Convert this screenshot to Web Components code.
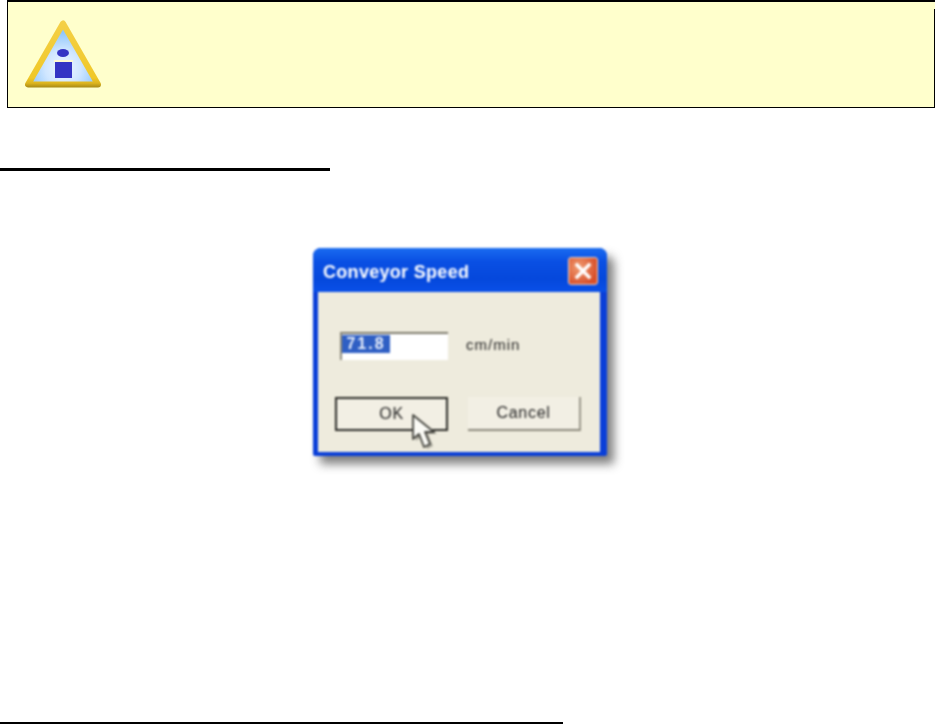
<!DOCTYPE html>
<html>
<head>
<meta charset="utf-8">
<title>Conveyor Speed</title>
<style>
  html, body { margin: 0; padding: 0; background: #fff; }
  body { width: 935px; height: 724px; overflow: hidden; display: flex; flex-direction: column; font-family: "Liberation Sans", sans-serif; }
</style>
</head>
<body>
<note-box>
  <svg slot="icon" width="80" height="72" viewBox="0 0 80 72" style="filter:blur(.5px)">
    <defs>
      <radialGradient id="sky" gradientUnits="userSpaceOnUse" cx="41" cy="48" r="36">
        <stop offset="0" stop-color="#f0f7ff"/>
        <stop offset="0.5" stop-color="#cfe6ff"/>
        <stop offset="1" stop-color="#8fc6fb"/>
      </radialGradient>
      <linearGradient id="rim" gradientUnits="userSpaceOnUse" x1="0" y1="0" x2="0" y2="68">
        <stop offset="0" stop-color="#f4d048"/>
        <stop offset="0.85" stop-color="#f0c828"/>
        <stop offset="0.93" stop-color="#dcb41e"/>
        <stop offset="1" stop-color="#a08414"/>
      </linearGradient>
    </defs>
    <path d="M41 3.5 L6 64.5 H76 Z" fill="url(#sky)" stroke="url(#rim)" stroke-width="6" stroke-linejoin="round"/>
    <ellipse cx="41" cy="33" rx="6" ry="4" fill="#3434c4"/>
    <rect x="33" y="42" width="17" height="16" fill="#3434c4"/>
    <rect x="32" y="40" width="19" height="2" fill="#fdf8d0"/>
  </svg>
</note-box>
<section-rule style="width:330px;height:3px;margin-top:60px"></section-rule>
<div style="display:flex;margin-top:77px;padding-left:313px">
  <xp-dialog heading="Conveyor Speed">
    <xp-field value="71.8" unit="cm/min"></xp-field>
    <div slot="actions" style="display:flex;gap:20px">
      <xp-button primary>OK</xp-button>
      <xp-button>Cancel</xp-button>
    </div>
    <svg slot="cursor" width="30" height="36" viewBox="0 0 30 36">
      <path d="M3 1 L3 25 L9 20 L14 33 L20 30 L15 18 L24 18 Z" fill="#55554e" opacity=".45" transform="translate(3 2)"/>
      <path d="M3 1 L3 25 L9 20 L14 33 L20 30 L15 18 L24 18 Z" fill="#fbfbf6" stroke="#44443e" stroke-width="1.8" stroke-linejoin="round"/>
    </svg>
  </xp-dialog>
</div>
<section-rule style="width:563px;margin-top:auto"></section-rule>

<script>
class NoteBox extends HTMLElement {
  constructor() {
    super();
    this.attachShadow({ mode: 'open' });
    this.shadowRoot.innerHTML = `
      <style>
        :host {
          display: flex;
          align-items: flex-start;
          position: relative;
          box-sizing: border-box;
          height: 108px;
          margin-left: 7px;
          padding: 18px 0 0 14px;
          background: #ffffcc;
          border-top: 2px solid #000;
          border-left: 1px solid #000;
          border-bottom: 1px solid #000;
        }
        .edge {
          position: absolute;
          top: 7px;
          bottom: 0;
          right: 0;
          width: 1px;
          background: #000;
        }
      </style>
      <slot name="icon"></slot>
      <div class="edge"></div>
    `;
  }
}

class SectionRule extends HTMLElement {
  constructor() {
    super();
    this.attachShadow({ mode: 'open' });
    this.shadowRoot.innerHTML = `
      <style>
        :host {
          display: block;
          height: 2px;
          flex: none;
          background: #000;
        }
      </style>
    `;
  }
}

class XpDialog extends HTMLElement {
  constructor() {
    super();
    this.attachShadow({ mode: 'open' });
    this.shadowRoot.innerHTML = `
      <style>
        :host {
          display: flex;
          flex-direction: column;
          position: relative;
          box-sizing: border-box;
          width: 294px;
          height: 208px;
          border-radius: 8px 8px 2px 2px;
          background: #0a3fd8;
          box-shadow: 7px 8px 10px rgba(60, 60, 60, .65);
          filter: blur(1px);
        }
        .bar {
          display: flex;
          align-items: center;
          justify-content: space-between;
          height: 44px;
          box-sizing: border-box;
          padding: 2px 9px 0 10px;
          border-radius: 8px 8px 0 0;
          background: linear-gradient(#1a6cf0, #0a50e4 30%, #0548dc 70%, #0a50e8);
        }
        .title {
          color: #fff;
          font: bold 18px "Liberation Sans", sans-serif;
          letter-spacing: .3px;
          padding-top: 2px;
        }
        .close {
          display: flex;
          align-items: center;
          justify-content: center;
          width: 30px;
          height: 28px;
          border-radius: 3px;
          border: 1px solid #f2d4c4;
          box-sizing: border-box;
          background: radial-gradient(circle at 35% 35%, #f09a70, #d8502a 75%);
        }
        .body {
          flex: 1;
          display: flex;
          flex-direction: column;
          margin: 0 7px 4px 5px;
          padding: 40px 0 0 17px;
          background: #eeebdd;
        }
        .actions { margin-top: 37px; }
        .cursor { position: absolute; left: 97px; top: 166px; line-height: 0; }
      </style>
      <div class="bar">
        <span class="title"></span>
        <span class="close">
          <svg width="18" height="18" viewBox="0 0 18 18">
            <path d="M3 3 L15 15 M15 3 L3 15" stroke="#fff" stroke-width="3.4" stroke-linecap="square"/>
          </svg>
        </span>
      </div>
      <div class="body">
        <slot></slot>
        <div class="actions"><slot name="actions"></slot></div>
      </div>
      <div class="cursor"><slot name="cursor"></slot></div>
    `;
    this.shadowRoot.querySelector('.title').textContent = this.getAttribute('heading');
  }
}

class XpField extends HTMLElement {
  constructor() {
    super();
    this.attachShadow({ mode: 'open' });
    this.shadowRoot.innerHTML = `
      <style>
        :host {
          display: flex;
          align-items: center;
          gap: 18px;
          padding-left: 5px;
          font: 15px "Liberation Sans", sans-serif;
          color: #222;
        }
        .input {
          box-sizing: border-box;
          display: flex;
          width: 108px;
          height: 28px;
          padding: 1px 0 7px 0;
          background: #fff;
          border-top: 2px solid #7d7a6c;
          border-left: 2px solid #8d8a7c;
        }
        .sel {
          display: flex;
          align-items: center;
          justify-content: center;
          width: 48px;
          background: #2f5fc4;
          color: #e8eefa;
          letter-spacing: 2px;
          font-size: 16px;
          font-weight: bold;
        }
        .unit { letter-spacing: 1px; padding-bottom: 4px; }
      </style>
      <div class="input"><span class="sel"></span></div>
      <span class="unit"></span>
    `;
    this.shadowRoot.querySelector('.sel').textContent = this.getAttribute('value');
    this.shadowRoot.querySelector('.unit').textContent = this.getAttribute('unit');
  }
}

class XpButton extends HTMLElement {
  constructor() {
    super();
    this.attachShadow({ mode: 'open' });
    this.shadowRoot.innerHTML = `
      <style>
        :host {
          display: flex;
          align-items: center;
          justify-content: center;
          box-sizing: border-box;
          width: 113px;
          height: 34px;
          font: 16px "Liberation Sans", sans-serif;
          letter-spacing: .7px;
          color: #222;
          background: #f2efe4;
          border-right: 2px solid #9a978a;
          border-bottom: 2px solid #8a877a;
        }
        :host([primary]) {
          border: 2px solid #2a2a26;
        }
      </style>
      <slot></slot>
    `;
  }
}

customElements.define('note-box', NoteBox);
customElements.define('section-rule', SectionRule);
customElements.define('xp-dialog', XpDialog);
customElements.define('xp-field', XpField);
customElements.define('xp-button', XpButton);
</script>
</body>
</html>
